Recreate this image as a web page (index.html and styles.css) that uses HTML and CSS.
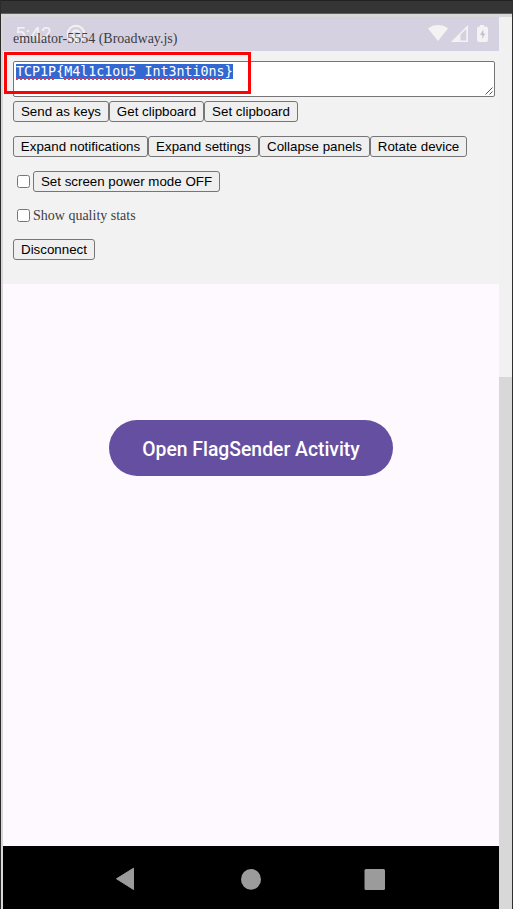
FILE: index.html
```html
<!DOCTYPE html>
<html lang="en">
<head>
<meta charset="utf-8">
<title>emulator-5554 (Broadway.js)</title>
<link rel="stylesheet" href="styles.css">
</head>
<body>
<div class="window">
  <header class="titlebar"></header>
  <div class="viewport">
    <main class="device">
      <section class="panel">
        <div class="statusbar">
          <span class="clock">5:42</span>
          <svg class="cast" width="20" height="20" viewBox="0 0 20 20"><circle cx="10" cy="10" r="8.3" fill="none" stroke="currentColor" stroke-width="2"/><circle cx="10" cy="10" r="3.6" fill="none" stroke="currentColor" stroke-width="2"/><path d="M10 10v9" stroke="currentColor" stroke-width="2"/></svg>
          <svg class="system" width="62" height="20" viewBox="0 0 62 20"><path d="M0 4.4C5.5-.2 14.500-.2 20 4.400L10 17Z" fill="currentColor"/><path d="M23 18 40 1V18Z" fill="currentColor"/><path d="M32.500 10.500 38.300 5V16.500H32.500Z" fill="#d6d1e1"/><path d="M52 1h4v1.500h2q2 0 2 2V16q0 2-2 2h-7q-2 0-2-2V4.500q0-2 2-2h1Z" fill="currentColor"/><path d="M55.300 5.500 52 11h2.300v4L57.200 9.500H55.300Z" fill="#c4c0ce"/></svg>
        </div>
        <div class="controls">
          <div class="name">emulator-5554 (Broadway.js)</div>
          <div class="input"><span class="selected"><span class="typo">TCP1P</span>{<span class="typo">M4l1c1ou5</span>_<span class="typo">Int3nti0ns</span>}</span>
            <svg class="grip" width="10" height="10" viewBox="0 0 10 10"><path d="M1.500 8.500 8.500 1.500M5.500 8.500 8.500 5.500" stroke="#555" fill="none"/></svg>
          </div>
          <div class="row first"><button style="width:96px">Send as keys</button><button style="width:95px">Get clipboard</button><button style="width:94px">Set clipboard</button></div>
          <div class="row"><button style="width:135px">Expand notifications</button><button style="width:111px">Expand settings</button><button style="width:111px">Collapse panels</button><button style="width:97px">Rotate device</button></div>
          <div class="row"><input type="checkbox"><button style="width:187px">Set screen power mode OFF</button></div>
          <label class="row stats"><input type="checkbox"><span>Show quality stats</span></label>
          <div class="row"><button style="width:82px">Disconnect</button></div>
        </div>
        <div class="marker"></div>
      </section>
      <section class="app"><div class="launch">Open FlagSender Activity</div></section>
      <nav class="navbar">
        <svg width="22" height="26" viewBox="0 0 22 26"><path d="M1.500 12.800 18.500 2.200V23.500Z" fill="#9b9b9b" stroke="#9b9b9b" stroke-linejoin="round"/></svg>
        <svg width="20" height="22" viewBox="0 0 20 22"><ellipse cx="10" cy="11.400" rx="10" ry="10.300" fill="#9b9b9b"/></svg>
        <svg width="21" height="22" viewBox="0 0 21 22"><rect x=".5" y="1" width="20.500" height="21" rx="1.500" fill="#9b9b9b"/></svg>
      </nav>
    </main>
    <aside class="gutter"></aside>
  </div>
</div>
</body>
</html>
```
FILE: styles.css
```css
* { box-sizing: border-box; }
body { margin: 0; background: #d8d8d8; font-family: "Liberation Serif", serif; }
svg { display: block; flex: none; }
.window { height: 909px; display: flex; flex-direction: column; border-left: 1px solid #2b2b2b; border-right: 1px solid #303030; overflow: hidden; }
.titlebar { height: 14px; flex: none; background: #353535; border-top: 1px solid #222; border-bottom: 1px solid #606060; }
.viewport { flex: 1; display: flex; padding: 3px 0 0 2px; }
.device { width: 496px; display: flex; flex-direction: column; }
.gutter { width: 13px; height: 360px; background: #f1f1f1; }
.panel { position: relative; height: 267px; background: #f2f2f2; }
.statusbar { height: 34px; display: flex; align-items: flex-start; padding: 7px 9px 0 11px; background: #d6d1e1; color: #f3f3f3; }
.clock { width: 41px; margin-left: 1px; font: 19px/20px Roboto, sans-serif; white-space: nowrap; }
.cast { margin-left: 10px; }
.system { margin-left: auto; }
.controls { position: absolute; inset: 13px 4px 0 10px; color: #3d3d42; }
.name { height: 18px; font-size: 14px; line-height: 18px; white-space: nowrap; }
.input { position: relative; height: 36px; margin-top: 13px; padding: 2px; background: #fff; border: 1px solid #767676; border-radius: 2px; }
.selected { display: block; width: 217px; height: 15px; background: #3367d1; color: #fff; font: 13.333px/15px "DejaVu Sans Mono", monospace; white-space: nowrap; }
.typo { text-decoration: underline dotted #e33b55 1.500px; text-underline-offset: 2px; text-decoration-skip-ink: none; }
.grip { position: absolute; right: 0; bottom: 0; }
.row { display: flex; align-items: center; height: 21px; margin-top: 14px; }
.row.first { margin-top: 4px; }
button { height: 21px; padding: 0; border: 1px solid #767676; border-radius: 3px; background: #efefef; color: #000; font: 13.333px "Liberation Sans", sans-serif; white-space: nowrap; }
input { width: 13px; height: 13px; margin: 0 3px 0 4px; }
.row.stats { height: 19px; font-size: 14px; }
.marker { position: absolute; left: 1px; top: 35px; width: 247px; height: 42px; border: 3px solid #f90505; }
.app { height: 562px; background: #fef9fe; display: flex; justify-content: center; align-items: flex-start; padding-top: 136px; }
.launch { width: 284px; height: 56px; border-radius: 28px; background: #654fa0; color: #fff; font: 500 19.350px/59px Roboto, sans-serif; text-align: center; white-space: nowrap; }
.navbar { flex: 1; background: #000; display: flex; justify-content: space-between; align-items: center; padding: 3px 114px 0 112px; }
```
